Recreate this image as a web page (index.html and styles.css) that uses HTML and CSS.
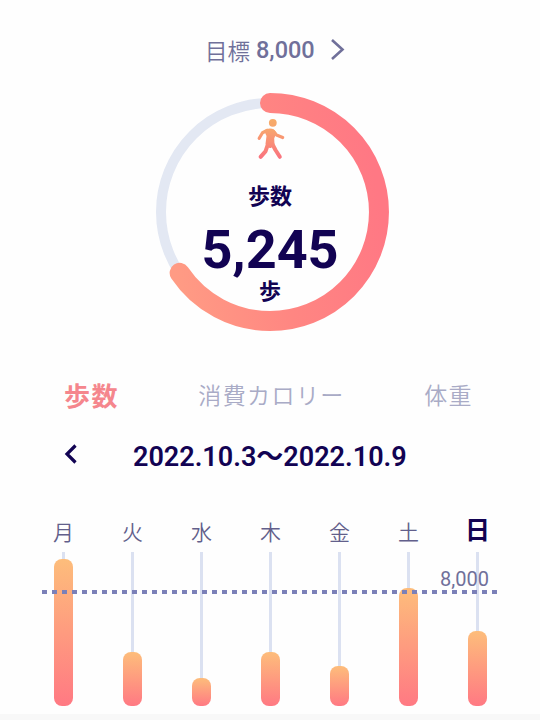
FILE: index.html
```
<!DOCTYPE html>
<html lang="ja">

<head>
    <meta charset="UTF-8">
    <meta name="viewport" content="width=device-width, initial-scale=1.0">
    <title>歩数</title>
    <link rel="stylesheet" href="styles.css">
</head>

<body>
    <div class="goal">
        <span class="goal-label">目標</span>
        <span class="goal-value">8,000</span>
        <svg class="goal-arrow" width="14" height="22" viewBox="0 0 14 22">
            <path d="M1 1 L11.5 10.5 L1 20" />
        </svg>
    </div>

    <div class="ring">
        <svg class="ring-chart" width="240" height="240" viewBox="0 0 240 240">
            <defs>
                <linearGradient id="ringGradient" gradientUnits="userSpaceOnUse" x1="20" y1="150" x2="230" y2="110">
                    <stop offset="0" stop-color="#ff9b84" />
                    <stop offset="0.5" stop-color="#ff8682" />
                    <stop offset="1" stop-color="#ff7884" />
                </linearGradient>
            </defs>
            <circle class="ring-track" cx="120" cy="120" r="109" />
            <path class="ring-value" d="M120 11 A109 109 0 0 1 120 229 A109 109 0 0 1 120 11" pathLength="8000" stroke-dasharray="5245 8000" />
        </svg>
        <div class="ring-content">
            <svg class="walker" width="30" height="44" viewBox="0 0 30 44">
                <defs>
                    <linearGradient id="walkerGradient" gradientUnits="userSpaceOnUse" x1="0" y1="0" x2="0" y2="42">
                        <stop offset="0" stop-color="#f6ad68" />
                        <stop offset="0.3" stop-color="#f8a36e" />
                        <stop offset="1" stop-color="#fa6f80" />
                    </linearGradient>
                </defs>
                <g fill="url(#walkerGradient)" stroke="url(#walkerGradient)">
                    <circle cx="17.8" cy="4.8" r="3.9" stroke="none" />
                    <path d="M9 12.5 Q14.5 8.8 19.5 12 L21.5 14.5 L19.2 20.5 L19.5 26.5 L16 30 L14.5 30 L10.5 26 L11.5 18 Z" stroke="none" />
                    <path class="limb" d="M12.5 12.3 L7.5 14.8 L4.2 20.3" />
                    <path class="limb" d="M18 13 L21.5 17 L27.7 19.5" />
                    <path class="leg" d="M13 26 L10.5 33.3 L5.6 38.8" />
                    <path class="leg" d="M17.3 26 L20.5 32 L24.8 38.8" />
                </g>
            </svg>
            <div class="ring-title">歩数</div>
            <div class="ring-steps">5,245</div>
            <div class="ring-unit">歩</div>
        </div>
    </div>

    <div class="tabs">
        <div class="tab active">歩数</div>
        <div class="tab">消費カロリー</div>
        <div class="tab">体重</div>
    </div>

    <div class="period">
        <svg width="14" height="20" viewBox="0 0 14 20">
            <path d="M12.5 1.5 L4 10 L12.5 18.5" />
        </svg>
        <div class="period-text">2022.10.3<span class="tilde">〜</span>2022.10.9</div>
    </div>

    <div class="chart">
        <div class="day">
            <div class="day-name">月</div>
            <div class="track"><div class="bar" style="height: 147px"></div></div>
        </div>
        <div class="day">
            <div class="day-name">火</div>
            <div class="track"><div class="bar" style="height: 54px"></div></div>
        </div>
        <div class="day">
            <div class="day-name">水</div>
            <div class="track"><div class="bar" style="height: 28px"></div></div>
        </div>
        <div class="day">
            <div class="day-name">木</div>
            <div class="track"><div class="bar" style="height: 54px"></div></div>
        </div>
        <div class="day">
            <div class="day-name">金</div>
            <div class="track"><div class="bar" style="height: 40px"></div></div>
        </div>
        <div class="day">
            <div class="day-name">土</div>
            <div class="track"><div class="bar" style="height: 118px"></div></div>
        </div>
        <div class="day">
            <div class="day-name today">日</div>
            <div class="track"><div class="bar" style="height: 75px"></div></div>
        </div>
        <div class="goal-line"></div>
        <div class="goal-line-label">8,000</div>
    </div>

    <div class="footer"></div>
</body>

</html>
```

FILE: styles.css
```
* {
    box-sizing: border-box;
}

body {
    font-family: Roboto, 'Noto Sans CJK JP', sans-serif;
    background-color: #fefefe;
    color: #120353;
    margin: 0;
    height: 720px;
    overflow: hidden;
    display: flex;
    flex-direction: column;
}

.goal {
    display: flex;
    align-items: center;
    height: 40px;
    margin-top: 30px;
    padding-left: 205px;
    color: #70709a;
}

.goal-label {
    font-size: 22.5px;
    font-weight: 350;
}

.goal-value {
    font-size: 23.5px;
    font-weight: 500;
    margin-left: 6px;
}

.goal-arrow {
    margin-left: 16px;
}

.goal-arrow path {
    fill: none;
    stroke: #70709a;
    stroke-width: 2.6;
}

.ring {
    display: grid;
    width: 240px;
    height: 240px;
    margin: 22px auto 0;
}

.ring-chart,
.ring-content {
    grid-area: 1 / 1;
}

.ring-track {
    fill: none;
    stroke: #e3e8f3;
    stroke-width: 10;
}

.ring-value {
    fill: none;
    stroke: url(#ringGradient);
    stroke-width: 20;
    stroke-linecap: round;
}

.ring-content {
    display: flex;
    flex-direction: column;
    align-items: center;
    padding-top: 26px;
}

.limb {
    fill: none;
    stroke-width: 3.2;
    stroke-linecap: round;
    stroke-linejoin: round;
}

.leg {
    fill: none;
    stroke-width: 4;
    stroke-linecap: round;
    stroke-linejoin: round;
}

.ring-title {
    font-size: 22px;
    font-weight: 700;
    line-height: 30px;
    margin-top: 20px;
}

.ring-steps {
    font-size: 54px;
    font-weight: 700;
    line-height: 60px;
    margin-top: 8px;
}

.ring-unit {
    font-size: 22px;
    font-weight: 700;
    line-height: 30px;
    margin-top: -3px;
}

.tabs {
    display: flex;
    justify-content: space-between;
    align-items: center;
    height: 40px;
    margin-top: 42px;
    padding: 0 67px 0 64px;
}

.tab {
    font-size: 23px;
    font-weight: 350;
    letter-spacing: 1.4px;
    color: #a9abc6;
}

.tab.active {
    font-size: 26px;
    font-weight: 700;
    color: #f5868d;
}

.period {
    display: flex;
    align-items: center;
    height: 40px;
    margin-top: 20px;
    padding-left: 63px;
}

.period path {
    fill: none;
    stroke: #120353;
    stroke-width: 3.2;
}

.period-text {
    font-size: 27px;
    font-weight: 600;
    margin-left: 56px;
}

.chart {
    position: relative;
    display: grid;
    grid-template-columns: repeat(7, 69px);
    height: 190px;
    margin: 42px 0 0 29px;
}

.day {
    display: flex;
    flex-direction: column;
    align-items: center;
}

.day-name {
    height: 36px;
    line-height: 34px;
    font-size: 21px;
    font-weight: 350;
    color: #625f8b;
}

.day-name.today {
    font-size: 25px;
    line-height: 30px;
    font-weight: 700;
    color: #120353;
}

.track {
    display: flex;
    align-items: flex-end;
    justify-content: center;
    width: 19px;
    height: 154px;
    background: linear-gradient(#dbe1f1, #dbe1f1) center / 3px 100% no-repeat;
}

.bar {
    width: 19px;
    border-radius: 8px;
    background: linear-gradient(#fdbd7b, #ff7983);
}

.goal-line {
    position: absolute;
    top: 74px;
    left: 13px;
    width: 456px;
    height: 4px;
    background: repeating-linear-gradient(90deg, #7b80b8 0 5px, transparent 5px 10px);
}

.goal-line-label {
    position: absolute;
    top: 51px;
    left: 411px;
    font-size: 20px;
    line-height: 24px;
    color: #70709a;
}

.footer {
    height: 6px;
    margin-top: 8px;
    background-color: #f8f8f8;
}
```
